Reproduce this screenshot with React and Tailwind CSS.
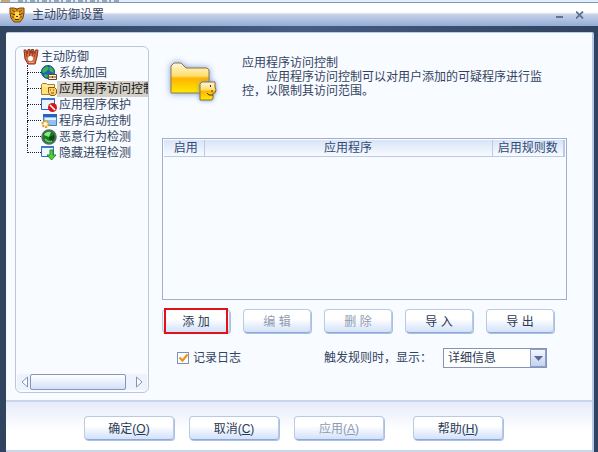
import { useState } from 'react';
import clsx from 'clsx';

function TigerIcon() {
  return (
    <svg width="16" height="16" viewBox="0 0 16 16" aria-hidden="true">
      <path d="M1 1h4l3 1 3-1h4v5l-1 5-3 4H5l-3-4-1-5z" fill="#d99a1c" stroke="#7a4310" />
      <path d="M3 3l3 2M13 3l-3 2M8 2v2M2 6l2 1M14 6l-2 1M3 10l2 0M13 10l-2 0" stroke="#7a4310" />
      <path d="M6 5h4v3l1 2-2 2H7l-2-2 1-2z" fill="#ffd84e" />
      <path d="M4 7h2v1H4zM10 7h2v1h-2zM7 9h2v1H7zM6 12h4v1H6z" fill="#5a2c08" />
    </svg>
  );
}

function GloveIcon() {
  return (
    <svg width="16" height="16" viewBox="0 0 16 16" aria-hidden="true">
      <path
        d="M1 1h2l1 4L5 .5h2l1 4 .5-4h2l.5 4 1.500-3.500h2.500L14 8l-2 7H5L2 10z"
        fill="#d4704a"
        stroke="#8a3018"
      />
      <path d="M3 3l1 5M6.500 2v5M9.500 2v5M12.500 3l-1 5" stroke="#a53d1e" />
      <circle cx="7.500" cy="9.500" r="2.500" fill="#fff" />
      <path d="M6 13.500h5" stroke="#f0a784" />
    </svg>
  );
}

function GlobeLockIcon() {
  return (
    <svg width="16" height="16" viewBox="0 0 16 16" aria-hidden="true">
      <circle cx="7" cy="7" r="6.500" fill="#1c62b8" stroke="#174a80" />
      <path d="M2 4l4-3 2 2-2 3-3 2-2-1zM9 1l3 3 1 4-3-1-2-2zM4 9l3 1-1 3-3-2z" fill="#3fb54a" />
      <path d="M7.500 9.500h8v5h-8z" fill="#fff3d8" stroke="#6b4a2a" />
      <path d="M8 12h7M11.500 11v2" stroke="#6b4a2a" />
    </svg>
  );
}

function FolderFaceIcon({ className }) {
  return (
    <svg className={className} viewBox="0 0 48 40" aria-hidden="true">
      <defs>
        <linearGradient id="folder" x1="0" y1="0" x2="0" y2="1">
          <stop offset="0" stopColor="#fff6dc" />
          <stop offset="0.42" stopColor="#ffdf70" />
          <stop offset="0.52" stopColor="#ffb400" />
          <stop offset="1" stopColor="#ffea00" />
        </linearGradient>
      </defs>
      <path
        d="M1 4l3-3h7l5 5h21l2 2v23H1z"
        fill="url(#folder)"
        stroke="#94763a"
        className="drop-shadow-[0_0_3px_#6f9ade]"
      />
      <path
        d="M30 22l2-2h13v5l1 3-1 3h-2v5l-1 2H30z"
        fill="url(#folder)"
        stroke="#94702a"
        className="drop-shadow-[0_0_2px_#6f9ade]"
      />
      <path d="M40.500 23v2M37 31l2 2h4M42 28v2" fill="none" stroke="#4c3410" />
    </svg>
  );
}

function SmallFolderIcon() {
  return (
    <svg width="16" height="16" viewBox="0 0 16 16" aria-hidden="true">
      <path d="M.5 3.500l1-1h4l1 1h7v10H.5z" fill="#ffe27a" stroke="#a8802c" />
      <path d="M1 5h12" stroke="#fff6cc" />
      <path d="M7.500 6.500h6l2 2v4l-2 2h-4l-2-3z" fill="#ffcf66" stroke="#8a5a18" />
      <path d="M9 9h1M12 9h1M10 12h3" stroke="#6c4610" />
    </svg>
  );
}

function BlockedIcon() {
  return (
    <svg width="16" height="16" viewBox="0 0 16 16" aria-hidden="true">
      <path d="M.5 1.500h13v11H.5z" fill="#eaf3ff" stroke="#2f5fae" />
      <path d="M0 1h14v2H0z" fill="#3d78cf" />
      <circle cx="11.500" cy="10.500" r="4.500" fill="#d8141c" />
      <path d="M9 8l5 5" stroke="#fff" strokeWidth="1.600" />
    </svg>
  );
}

function StartupIcon() {
  return (
    <svg width="16" height="16" viewBox="0 0 16 16" aria-hidden="true">
      <path d="M2.500 1.500h13v11h-13z" fill="#8ec2f5" stroke="#4a7cc0" />
      <path d="M2 1h14v3H2z" fill="#2c62bd" />
      <path d="M4 6h11" stroke="#e2f1ff" strokeWidth="2" />
      <circle cx="4.500" cy="11" r="3" fill="#ffe9a8" stroke="#e29a22" strokeWidth="2" strokeDasharray="2 1" />
      <circle cx="4.500" cy="11" r="1.500" fill="#fff" />
    </svg>
  );
}

function RadarIcon() {
  return (
    <svg width="16" height="16" viewBox="0 0 16 16" aria-hidden="true">
      <circle cx="8" cy="8" r="7" fill="#1c7a26" stroke="#5c6a66" strokeWidth="1.500" />
      <path d="M8 8L3 6a6 6 0 0 1 7-3z" fill="#8bea7c" />
      <path d="M8 8l5-2a5 5 0 0 1-4 7z" fill="#0c4a16" />
      <path d="M4 10q3 4 7 2" fill="none" stroke="#5fd45b" strokeWidth="1.500" />
    </svg>
  );
}

function HiddenProcessIcon() {
  return (
    <svg width="16" height="16" viewBox="0 0 16 16" aria-hidden="true">
      <path d="M.5 1.500h12v10H.5z" fill="#edf5ff" stroke="#3a66ac" />
      <path d="M0 1h13v2H0z" fill="#3d78cf" />
      <path d="M9 5h3v5h3l-4.500 5L6 10h3z" fill="#52d043" stroke="#218b22" />
    </svg>
  );
}

const TREE_ITEMS = [
  { label: '系统加固', Icon: GlobeLockIcon },
  { label: '应用程序访问控制', Icon: SmallFolderIcon },
  { label: '应用程序保护', Icon: BlockedIcon },
  { label: '程序启动控制', Icon: StartupIcon },
  { label: '恶意行为检测', Icon: RadarIcon },
  { label: '隐藏进程检测', Icon: HiddenProcessIcon },
];

const RULE_ACTIONS = [
  { label: '添 加', highlighted: true },
  { label: '编 辑', disabled: true },
  { label: '删 除', disabled: true },
  { label: '导 入' },
  { label: '导 出' },
];

function PushButton({ children, className, disabled }) {
  return (
    <button
      type="button"
      disabled={disabled}
      className={clsx(
        'h-6 rounded border border-[#bcc9e2] border-b-[#8fa9d6] bg-linear-to-b from-white from-40% to-[#d3e1fa] pt-px shadow-[1px_1px_0_#a9bfe4]',
        disabled ? 'text-[#8f9bb0]' : 'text-[#2b3a55]',
        className
      )}
    >
      {children}
    </button>
  );
}

function TitleBar() {
  return (
    <header className="flex h-6 shrink-0 items-center border-t border-[#7f98b8] bg-linear-to-b from-white from-40% via-[#c6d1e8] via-50% to-[#93add6] pr-2 pl-[9px]">
      <TigerIcon />
      <h1 className="ml-[7px] flex-1 text-[#33435f]">主动防御设置</h1>
      <button type="button" aria-label="最小化" className="flex h-4 w-5 items-center justify-center">
        <svg width="8" height="8" viewBox="0 0 8 8">
          <path d="M0 5h7v2H0z" fill="#5f7393" />
        </svg>
      </button>
      <button type="button" aria-label="关闭" className="flex h-4 w-5 items-center justify-center">
        <svg width="8" height="8" viewBox="0 0 8 8">
          <path d="M0 .5l7 7M7 .5l-7 7" stroke="#5f7393" strokeWidth="1.800" />
        </svg>
      </button>
    </header>
  );
}

function Sidebar() {
  const [selected, setSelected] = useState('应用程序访问控制');

  return (
    <nav className="flex w-[134px] shrink-0 flex-col overflow-hidden rounded-md border border-[#bcc8da]">
      <div className="flex-1 pt-[2px] pl-[7px]">
        <div className="flex h-4 items-center gap-[2px] whitespace-nowrap">
          <GloveIcon />
          <span>主动防御</span>
        </div>
        <ul>
          {TREE_ITEMS.map(({ label, Icon }, i) => (
            <li key={label} className="flex h-4 items-center whitespace-nowrap">
              <span className="ml-1 flex h-4 w-[14px] shrink-0 flex-col">
                <span className="h-2 border-b border-l border-dotted border-[#222]" />
                <span className={clsx('h-2', i < TREE_ITEMS.length - 1 && 'border-l border-dotted border-[#222]')} />
              </span>
              <span className="w-4 shrink-0">
                <Icon />
              </span>
              <button
                type="button"
                onClick={() => setSelected(label)}
                className={clsx('h-4 pl-[2px] leading-4', selected === label && 'bg-[#d4d0c8] text-[#111]')}
              >
                {label}
              </button>
            </li>
          ))}
        </ul>
      </div>
      <div className="mx-px mb-[2px] flex h-4 items-center bg-[#eef2fc] px-1">
        <svg width="8" height="12" viewBox="0 0 8 12">
          <path d="M6.500 1v10L1 6z" fill="#fff" stroke="#8492b4" />
        </svg>
        <div className="ml-px h-4 w-24 rounded-xs border border-[#8595bb] bg-linear-to-b from-white to-[#d3e0f8]" />
        <svg className="ml-auto" width="8" height="12" viewBox="0 0 8 12">
          <path d="M1.500 1v10L7 6z" fill="#fff" stroke="#8492b4" />
        </svg>
      </div>
    </nav>
  );
}

function RuleTable() {
  return (
    <div className="h-[162px] border border-[#a3aecb] p-px">
      <table className="w-full table-fixed border-collapse text-[#2f4a75]">
        <thead>
          <tr className="h-4 bg-linear-to-b from-[#d9e4f8] to-[#fafcff]">
            <th className="w-10 border-r border-b border-[#bccbe4] p-0 pl-1 font-normal">启用</th>
            <th className="border-r border-b border-[#bccbe4] p-0 font-normal">应用程序</th>
            <th className="w-[72px] border-r-2 border-b border-[#bccbe4] p-0 font-normal">启用规则数</th>
          </tr>
        </thead>
        <tbody />
      </table>
    </div>
  );
}

function AccessControl() {
  const [logging, setLogging] = useState(true);

  return (
    <main className="flex min-w-0 flex-1 flex-col pr-[25px]">
      <section className="flex h-[92px] gap-6 pt-[10px] pl-2">
        <FolderFaceIcon className="mt-[6px] h-10 w-12 shrink-0 overflow-visible" />
        <div className="max-w-[304px] leading-[14px]">
          <h2>应用程序访问控制</h2>
          <p className="indent-6">应用程序访问控制可以对用户添加的可疑程序进行监控，以限制其访问范围。</p>
        </div>
      </section>

      <RuleTable />

      <div className="mt-[9px] flex gap-[13px]">
        {RULE_ACTIONS.map(({ label, highlighted, disabled }) => (
          <PushButton
            key={label}
            disabled={disabled}
            className={clsx(
              'w-[68px] shrink-0',
              highlighted && 'relative after:absolute after:inset-x-px after:-inset-y-[2px] after:border-2 after:border-[#e01418]'
            )}
          >
            {label}
          </PushButton>
        ))}
      </div>

      <div className="mt-[15px] flex h-5 items-center pl-[15px]">
        <label className="flex items-center gap-1">
          <span className="relative flex size-3">
            <input
              type="checkbox"
              checked={logging}
              onChange={(e) => setLogging(e.target.checked)}
              className="size-3 appearance-none border border-[#7e91b5] bg-white"
            />
            {logging && (
              <svg className="pointer-events-none absolute inset-0" width="12" height="12" viewBox="0 0 12 12">
                <path d="M2.500 5.500l3 3 5-6" fill="none" stroke="#e8961e" strokeWidth="2.200" />
              </svg>
            )}
          </span>
          记录日志
        </label>
        <label htmlFor="display" className="ml-[83px] whitespace-nowrap">
          触发规则时，显示：
        </label>
        <span className="relative ml-[11px] flex">
          <select
            id="display"
            className="h-5 w-[104px] appearance-none border border-[#8595b5] bg-white pl-1 text-[#2b3a55]"
          >
            <option>详细信息</option>
          </select>
          <span className="pointer-events-none absolute top-px right-px flex h-[18px] w-4 items-center justify-center border border-[#8d9fc2] bg-linear-to-b from-[#f4f7fe] to-[#c4d2ee]">
            <svg width="9" height="5" viewBox="0 0 9 5">
              <path d="M0 0h9L4.500 5z" fill="#5a6b98" />
            </svg>
          </span>
        </span>
      </div>
    </main>
  );
}

function FooterBar() {
  return (
    <footer className="flex h-[52px] shrink-0 items-center gap-[15px] border-t-2 border-b-2 border-[#c9d6ea] bg-linear-to-b from-[#e6ecf9] to-white to-60% pt-1 pl-[78px]">
      <PushButton className="w-[90px]">
        确定(<u>O</u>)
      </PushButton>
      <PushButton className="w-[90px]">
        取消(<u>C</u>)
      </PushButton>
      <PushButton className="w-[90px]" disabled>
        应用(<u>A</u>)
      </PushButton>
      <PushButton className="ml-[14px] w-[90px]">
        帮助(<u>H</u>)
      </PushButton>
    </footer>
  );
}

export default function App() {
  return (
    <div className="flex min-h-screen flex-col bg-[#3c5072] font-['Liberation_Sans','Noto_Sans_CJK_SC',sans-serif] text-[12px] leading-4 text-[#33435f]">
      {/* Edge of the window behind */}
      <div className="h-[2px] shrink-0 bg-[#dfeefa]">
        <svg width="130" height="2" viewBox="0 0 130 2">
          <path d="M1 1h9" stroke="#c9a870" strokeWidth="2" />
          <path d="M18 1h101" stroke="#4a6078" strokeWidth="1" strokeDasharray="5 2 2 3" />
        </svg>
      </div>
      <TitleBar />
      <div className="flex flex-1 flex-col bg-linear-to-r from-[#30435f] via-[#465c82] to-[#30435f] pt-[6px] pr-1 pl-[6px]">
        <div className="flex flex-1 flex-col rounded-t-xs border-t border-r-2 border-[#b9cae8] bg-[#f8fbff]">
          <div className="flex flex-1 gap-[13px] pt-[13px] pb-[7px] pl-[9px]">
            <Sidebar />
            <AccessControl />
          </div>
          <FooterBar />
        </div>
      </div>
    </div>
  );
}
